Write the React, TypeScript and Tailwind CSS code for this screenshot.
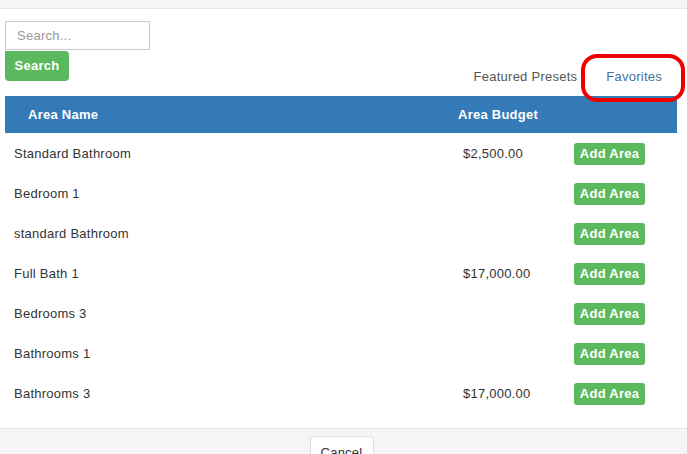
import React from "react";

const rows = [
  { name: "Standard Bathroom", budget: "$2,500.00" },
  { name: "Bedroom 1", budget: "" },
  { name: "standard Bathroom", budget: "" },
  { name: "Full Bath 1", budget: "$17,000.00" },
  { name: "Bedrooms 3", budget: "" },
  { name: "Bathrooms 1", budget: "" },
  { name: "Bathrooms 3", budget: "$17,000.00" },
];

export default function App() {
  return (
    <div
      className="w-[687px] h-[454px] overflow-hidden bg-white text-[13px] text-[#333] tracking-[0.25px]"
      style={{ fontFamily: '"Liberation Sans", Arial, sans-serif' }}
    >
      <div className="h-[9px] bg-[#f5f5f5] border-b border-[#e5e5e5]" />
      <div className="pl-[5px] pr-[10px]">
        <div className="flex justify-between items-end mt-[12px]">
          <div className="flex flex-col items-start mb-[15px]">
            <input
              placeholder="Search..."
              className="w-[145px] h-[29px] border border-[#ccc] pl-[11px] text-[13px] tracking-[0.25px] text-[#555] placeholder:text-[#999] outline-none"
            />
            <button className="mt-[1px] w-[64px] h-[30px] bg-[#5cb85c] text-white font-bold text-[13px] tracking-[0.25px] rounded-b-[4px] rounded-tr-[4px]">
              Search
            </button>
          </div>
          <div className="flex">
            <div className="h-[38px] px-[14px] flex items-center text-[#555]">Featured Presets</div>
            <div className="relative h-[38px] px-[15px] flex items-center text-[#46709c]">
              Favorites
              <div className="absolute left-[-10px] right-[-8px] top-[-4px] bottom-[-6px] border-[4px] border-[#ee0000] rounded-[16px] z-10 pointer-events-none" />
            </div>
          </div>
        </div>
        <div>
          <div className="flex items-center h-[37px] bg-[#337ab7] text-white font-bold">
            <div className="w-[444px] pl-[23px]">Area Name</div>
            <div className="w-[116px] pl-[9px]">Area Budget</div>
            <div className="flex-1" />
          </div>
          {rows.map((r, i) => (
            <div key={i} className="flex h-[40px] items-start">
              <div className="w-[444px] pl-[9px] pt-[11px]">{r.name}</div>
              <div className="w-[116px] pl-[14px] pt-[11px]">{r.budget}</div>
              <div className="flex-1 pl-[9px] pt-[10px]">
                <button className="w-[71px] h-[22px] bg-[#5cb85c] text-white font-bold text-[13px] tracking-[0.25px] rounded-[3px]">
                  Add Area
                </button>
              </div>
            </div>
          ))}
        </div>
      </div>
      <div className="mt-[15px] bg-[#f5f5f5] border-t border-[#e5e5e5] h-[40px] flex justify-center pt-[7px] pr-[4px]">
        <button className="h-[34px] w-[64px] bg-white border border-[#ddd] rounded-[4px] text-[#333] text-[13px] tracking-[0.25px]">
          Cancel
        </button>
      </div>
    </div>
  );
}
